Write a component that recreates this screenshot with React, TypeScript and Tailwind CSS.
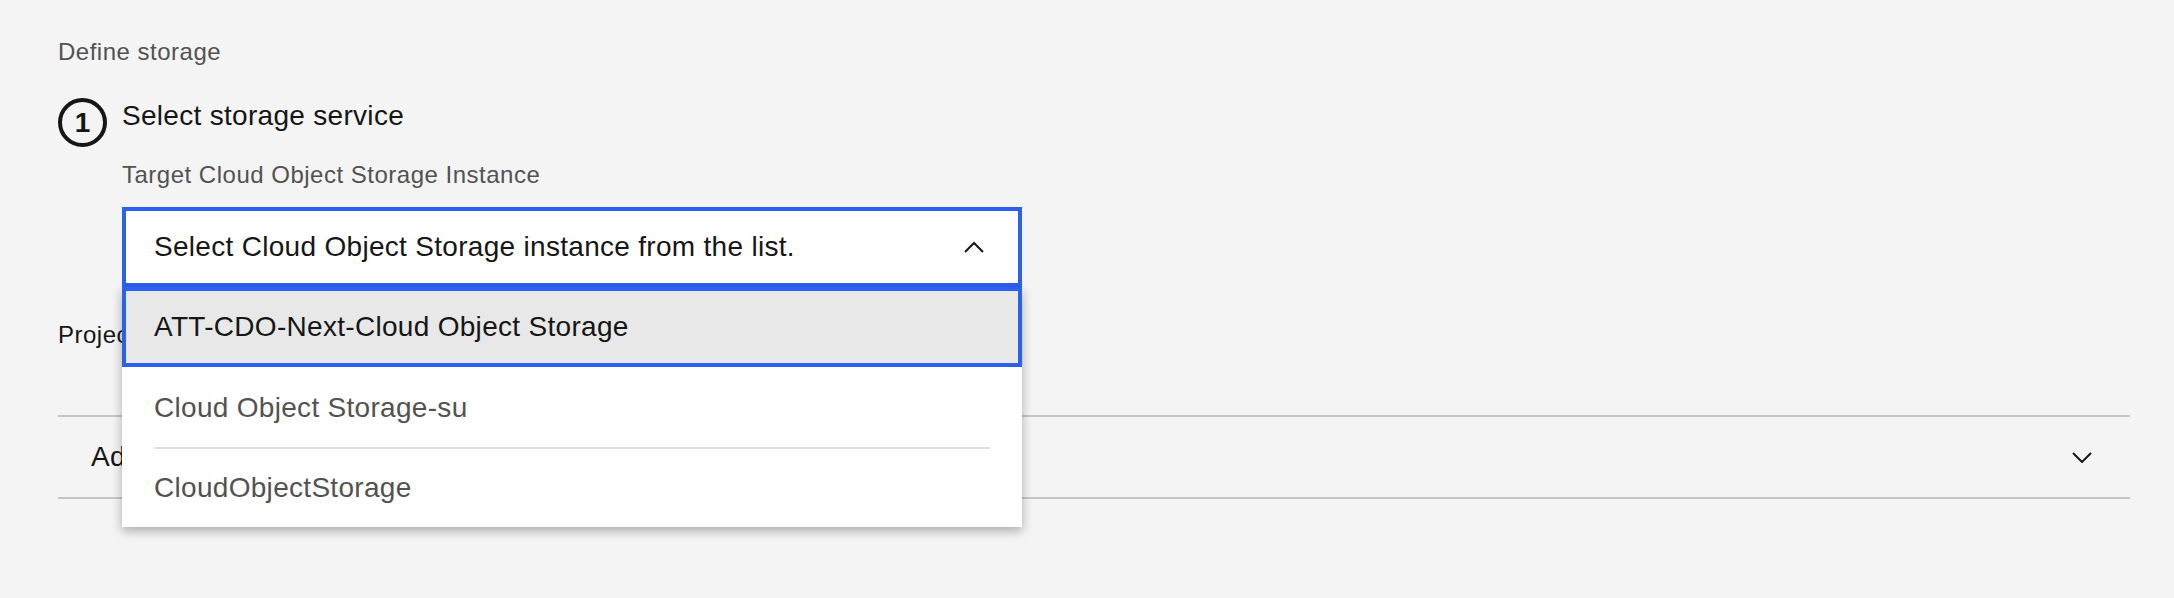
import React from "react";

type OptionProps = {
  label: string;
  active?: boolean;
  first?: boolean;
};

function ChevronUp() {
  return (
    <svg width="20" height="12" viewBox="0 0 20 12" fill="none">
      <polyline points="1,11 10,2 19,11" stroke="#161616" strokeWidth="2" />
    </svg>
  );
}

function ChevronDown() {
  return (
    <svg width="20" height="11" viewBox="0 0 20 11" fill="none">
      <polyline points="1,1 10,10 19,1" stroke="#161616" strokeWidth="2" />
    </svg>
  );
}

function MenuOption({ label, active, first }: OptionProps) {
  if (active) {
    return (
      <div className="h-[80px] border-[4px] border-[#2c60f0] bg-[#e8e8e8] pl-[28px] text-[28px] leading-[72px] tracking-[0.3px] text-[#161616]">
        {label}
      </div>
    );
  }
  return (
    <div className="h-[80px]">
      <div
        className={
          first
            ? "mx-[32px] border-t-2 border-transparent text-[28px] leading-[78px] tracking-[0.3px] text-[#525252]"
            : "mx-[32px] border-t-2 border-[#e0e0e0] text-[28px] leading-[78px] tracking-[0.3px] text-[#525252]"
        }
      >
        {label}
      </div>
    </div>
  );
}

export default function App() {
  return (
    <div
      className="h-[598px] w-full bg-[#f4f4f4] pl-[58px] pr-[44px] pt-[36px]"
      style={{ fontFamily: '"Liberation Sans", Arial, sans-serif' }}
    >
      <p className="text-[24px] leading-[32px] tracking-[0.5px] text-[#525252]">Define storage</p>

      <div className="mt-[30px] flex items-start">
        <div className="flex h-[49px] w-[49px] shrink-0 items-center justify-center rounded-full border-[4px] border-[#161616] text-[28px] font-bold leading-none text-[#161616]">
          1
        </div>
        <div className="ml-[15px]">
          <h2 className="text-[28px] leading-[36px] tracking-[0.3px] text-[#161616]">Select storage service</h2>
          <p className="mt-[25px] text-[24px] leading-[32px] tracking-[0.5px] text-[#525252]">
            Target Cloud Object Storage Instance
          </p>
          <div className="relative mt-[16px] w-[900px]">
            <div className="flex h-[80px] items-center justify-between border-[4px] border-[#2c60f0] bg-white pl-[28px] pr-[34px]">
              <span className="text-[28px] leading-[72px] tracking-[0.3px] text-[#161616]">
                Select Cloud Object Storage instance from the list.
              </span>
              <ChevronUp />
            </div>
            {/* open menu sits over the fields below */}
            <div className="absolute left-0 right-0 top-full z-10 bg-white shadow-[0_4px_10px_rgba(0,0,0,0.3)]">
              <MenuOption label="ATT-CDO-Next-Cloud Object Storage" active />
              <MenuOption label="Cloud Object Storage-su" first />
              <MenuOption label="CloudObjectStorage" />
            </div>
          </div>
        </div>
      </div>

      <p className="mt-[32px] text-[24px] leading-[32px] tracking-[0.5px] text-[#161616]">Project storage</p>

      <div className="mt-[64px] border-y-2 border-[#c6c6c6]">
        <div className="flex h-[80px] items-center justify-between pl-[33px] pr-[38px]">
          <span className="text-[28px] leading-[80px] tracking-[0.3px] text-[#161616]">Advanced options</span>
          <ChevronDown />
        </div>
      </div>
    </div>
  );
}
